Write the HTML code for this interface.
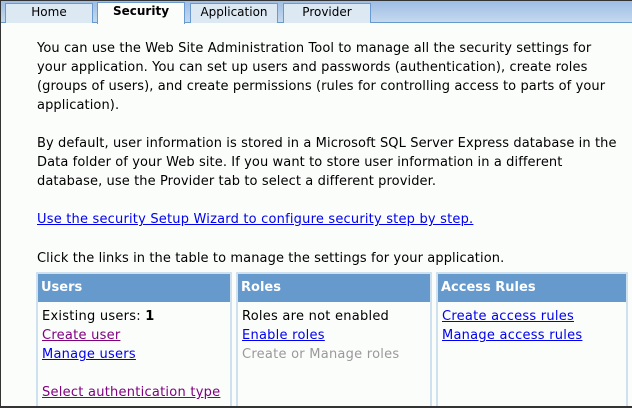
<!DOCTYPE html>
<html><head><style>
*{margin:0;padding:0;box-sizing:border-box}
body{width:632px;height:408px;overflow:hidden;background:#fbfdfb;font-family:"DejaVu Sans","Liberation Sans",sans-serif;font-size:13px;color:#000}
#frame{position:absolute;left:0;top:0;width:632px;height:408px;border:1px solid #333;border-right:none;border-bottom:2px solid #333}
#bar{position:absolute;left:1px;top:1px;width:631px;height:22px;background:linear-gradient(#9dbde3,#c5d9ef);border-bottom:1px solid #6699cc}
.tab{position:absolute;top:3px;height:20px;width:88px;background:#dce9f3;border:1px solid #6a9bd0;border-bottom:none;text-align:center;font-size:12px;line-height:17px}
.tab.sel{top:2px;height:22px;background:#fbfdfb;font-weight:bold}
p{position:absolute;left:37px;width:588px;line-height:19px;letter-spacing:0.1px}
a{color:#0000ee;text-decoration:underline}
a.v{color:#800080}
.col{position:absolute;top:272px;width:196px;height:134px;border:2px solid #cfe0ee;border-bottom:none}
.hd{background:#6699cc;color:#fff;font-weight:bold;font-size:13px;height:28px;line-height:28px;padding-left:3px}
.bd{padding:5px 0 0 4px;line-height:19px;white-space:nowrap;letter-spacing:0.25px}
.gray{color:#999}
</style></head><body>
<div id="frame"></div>
<div id="bar"></div>
<div class="tab" style="left:5px">Home</div>
<div class="tab sel" style="left:97px">Security</div>
<div class="tab" style="left:190px">Application</div>
<div class="tab" style="left:283px">Provider</div>
<p style="top:39px">You can use the Web Site Administration Tool to manage all the security settings for your application. You can set up users and passwords (authentication), create roles (groups of users), and create permissions (rules for controlling access to parts of your application).</p>
<p style="top:134px">By default, user information is stored in a Microsoft SQL Server Express database in the Data folder of your Web site. If you want to store user information in a different database, use the Provider tab to select a different provider.</p>
<p style="top:210px;letter-spacing:0.2px"><a>Use the security Setup Wizard to configure security step by step.</a></p>
<p style="top:249px">Click the links in the table to manage the settings for your application.</p>
<div class="col" style="left:36px"><div class="hd">Users</div><div class="bd">Existing users: <b>1</b><br><a class="v">Create user</a><br><a>Manage users</a><br><br><a class="v">Select authentication type</a></div></div>
<div class="col" style="left:236px"><div class="hd">Roles</div><div class="bd">Roles are not enabled<br><a>Enable roles</a><br><span class="gray">Create or Manage roles</span></div></div>
<div class="col" style="left:436px;width:192px"><div class="hd">Access Rules</div><div class="bd"><a>Create access rules</a><br><a>Manage access rules</a></div></div>
</body></html>
